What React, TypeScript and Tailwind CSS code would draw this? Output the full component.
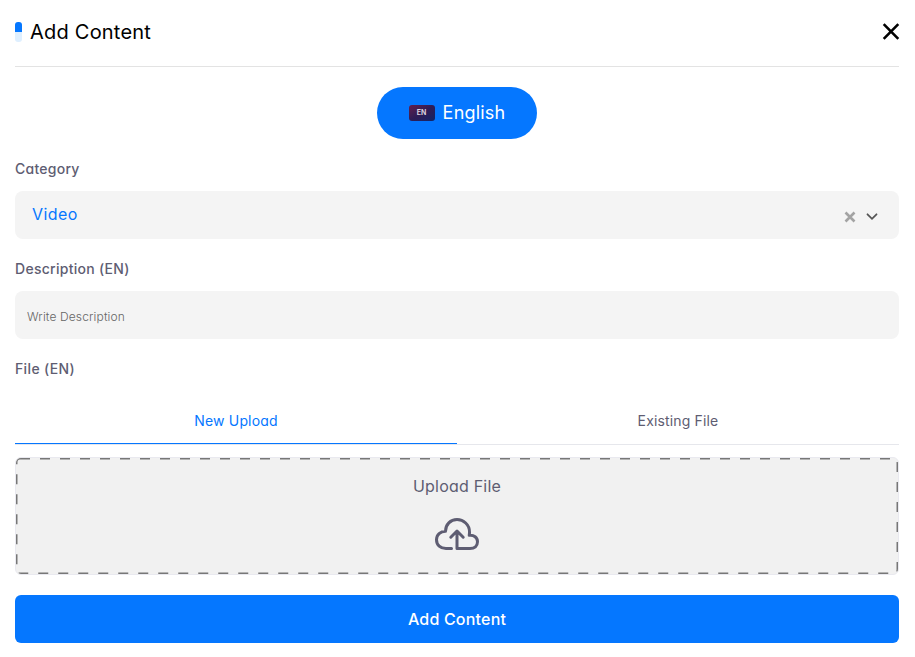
export default function App() {
  return (
    <main className="flex h-[657px] w-[915px] flex-col bg-white px-[15px] pr-4 font-['Inter','Liberation_Sans',sans-serif] text-[#5e5d72] [font-feature-settings:'cv11']">
      <header className="flex h-[67px] shrink-0 items-center justify-between border-b border-[#e3e3e3] pb-[3px]">
        <div className="flex items-center gap-2">
          <span className="flex h-5 w-[7px] flex-col overflow-hidden rounded-[3px]">
            <span className="h-[10px] bg-[#0577ff]" />
            <span className="h-[10px] bg-[#deefff]" />
          </span>
          <h1 className="text-[20px] leading-6 tracking-[0.22px] text-black">Add Content</h1>
        </div>
        <button aria-label="Close" className="-mr-px">
          <svg width="18" height="17" viewBox="0 0 18 17" fill="none" stroke="black" strokeWidth="2.6">
            <path d="M1.700 1.200 16.300 15.800M16.300 1.200 1.700 15.800" />
          </svg>
        </button>
      </header>

      <button className="mt-5 flex h-[52px] w-40 shrink-0 items-center justify-center gap-2 self-center rounded-full bg-[#0577ff] text-white">
        <span className="flex h-4 w-[26px] items-center justify-center rounded-[3px] bg-linear-to-br from-[#641a4b] via-[#2e1c55] to-[#0c2468] pt-px text-[7px] font-bold text-[#d9d2df]">EN</span>
        <span className="text-[18px] leading-6 tracking-[0.2px]">English</span>
      </button>

      <label className="mt-5 h-5 shrink-0 text-[14px] leading-5 font-medium tracking-[0.25px]">Category</label>
      <div className="mt-3 flex h-12 shrink-0 items-center justify-between rounded-lg bg-[#f4f4f4] pr-5 pl-[17px]">
        <span className="pb-0.5 text-[16px] leading-6 tracking-[0.4px] text-[#0577ff]">Video</span>
        <span className="flex items-center gap-[9px] pt-[3px]">
          <svg width="12" height="12" viewBox="0 0 12 12" stroke="#a3a3a3" strokeWidth="2.6">
            <path d="M1.5 1.5l9 9M10.5 1.5l-9 9" />
          </svg>
          <svg width="14" height="10" viewBox="0 0 14 10" fill="none" stroke="#555" strokeWidth="1.8" strokeLinecap="round">
            <path d="M2.5 2.3 7 6.8l4.500-4.500" />
          </svg>
        </span>
      </div>

      <label className="mt-5 h-5 shrink-0 text-[14px] leading-5 font-medium tracking-[0.28px]">Description (EN)</label>
      <input
        className="mt-3 h-12 shrink-0 rounded-lg bg-[#f4f4f4] px-3 pt-[3px] text-[12px] font-light tracking-[0.13px] placeholder:text-[#666] focus:outline-none"
        placeholder="Write Description"
      />

      <label className="mt-5 h-5 shrink-0 text-[14px] leading-5 font-medium tracking-[0.36px]">File (EN)</label>
      <div className="mt-[19px] flex h-[47px] shrink-0 border-b border-[#e6e7ec] text-[14px] leading-5 tracking-[0.15px]">
        <button className="flex-1 border-b border-[#0577ff] text-[#0577ff]">New Upload</button>
        <button className="flex-1 border-b border-transparent">Existing File</button>
      </div>

      <section className="relative mt-3 flex h-[118px] shrink-0 flex-col items-center overflow-hidden rounded-md border border-[#e9e9ef] bg-[#f1f1f1] pt-4">
        <svg className="absolute inset-0" width="882" height="116">
          <rect width="882" height="116" rx="4" fill="none" stroke="#777" strokeWidth="3" strokeDasharray="10 10" />
        </svg>
        <p className="text-[16px] leading-6 tracking-[0.2px]">Upload File</p>
        <svg className="mt-5" width="44" height="33" viewBox="0 0 44 33" fill="none" stroke="#5e5d72" strokeWidth="3" strokeLinecap="round" strokeLinejoin="round">
          <path d="M16.500 30.500H11C5.500 30.500 1.500 27 1.500 21.700S5.500 13.300 10.500 13.300C10.500 6.500 15.500 1.600 22 1.600S34.500 6.500 34.500 14c0 1 0 2-.3 3.300C39 16.800 42.500 19.500 42.500 23.800S39.500 30.500 35 30.500H22V14M15.800 19.200 22 13l6.200 6.200" />
        </svg>
      </section>

      <button className="mt-5 h-12 shrink-0 rounded-md bg-[#0577ff] text-[16px] font-medium tracking-[0.2px] text-white">Add Content</button>
    </main>
  );
}
